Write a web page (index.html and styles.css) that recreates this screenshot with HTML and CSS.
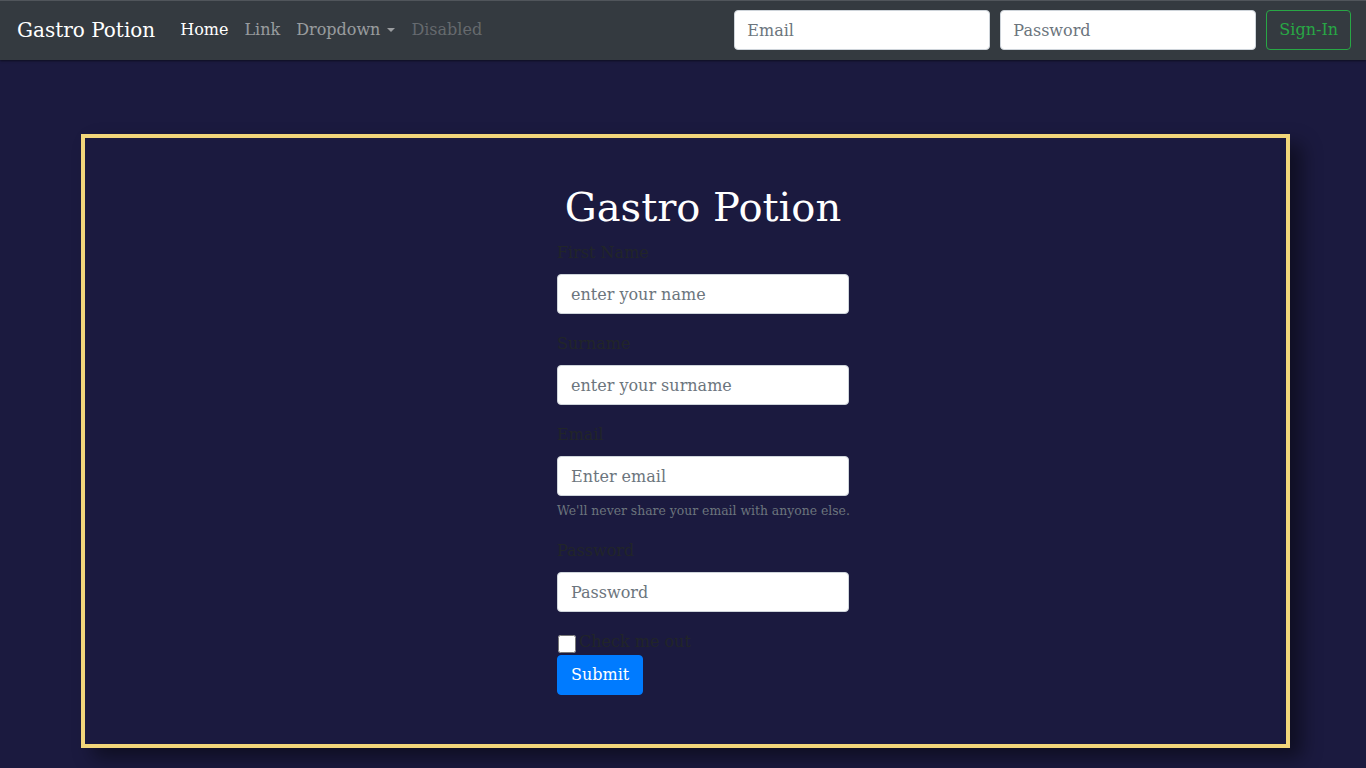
FILE: index.html
```html
<!DOCTYPE html>
<html lang="en">
<head>
<meta charset="utf-8">
<title>Gastro Potion</title>
<link rel="stylesheet" href="styles.css">
</head>
<body>
<nav class="navbar">
  <div class="nav-left">
    <a class="brand" href="#">Gastro Potion</a>
    <ul class="nav-links">
      <li><a class="nav-link active" href="#">Home</a></li>
      <li><a class="nav-link" href="#">Link</a></li>
      <li><a class="nav-link dropdown" href="#">Dropdown<span class="caret"></span></a></li>
      <li><a class="nav-link disabled" href="#">Disabled</a></li>
    </ul>
  </div>
  <form class="nav-form">
    <input class="nav-input" type="email" placeholder="Email">
    <input class="nav-input" type="password" placeholder="Password">
    <button class="btn-signin" type="button">Sign-In</button>
  </form>
</nav>
<main class="page">
  <section class="frame">
    <h1 class="title">Gastro Potion</h1>
    <form class="signup">
      <div class="group">
        <label class="label">First Name</label>
        <input class="field" type="text" placeholder="enter your name">
      </div>
      <div class="group">
        <label class="label">Surname</label>
        <input class="field" type="text" placeholder="enter your surname">
      </div>
      <div class="group">
        <label class="label">Email</label>
        <input class="field" type="email" placeholder="Enter email">
        <small class="help">We'll never share your email with anyone else.</small>
      </div>
      <div class="group">
        <label class="label">Password</label>
        <input class="field" type="password" placeholder="Password">
      </div>
      <div class="check">
        <input class="check-box" type="checkbox">
        <label class="check-label">Check me out</label>
      </div>
      <button class="btn-submit" type="button">Submit</button>
    </form>
  </section>
</main>
</body>
</html>
```

FILE: styles.css
```css
* { box-sizing: border-box; }

body {
  margin: 0;
  background: #1b1a3f;
  font-family: "DejaVu Serif", "Liberation Serif", serif;
  font-size: 16px;
  line-height: 24px;
  color: #212529;
  min-height: 768px;
}

.navbar {
  display: flex;
  align-items: center;
  justify-content: space-between;
  height: 60px;
  padding: 0 15px 1px 17px;
  background: #343a40;
  border-top: 1px solid #50555b;
  box-shadow: 0 1px 2px rgba(0,0,0,.5);
}

.nav-left { display: flex; align-items: center; }

.brand {
  color: #fff;
  text-decoration: none;
  font-size: 20px;
  line-height: 30px;
  margin-right: 17px;
  white-space: nowrap;
}

.nav-links {
  list-style: none;
  display: flex;
  margin: 0;
  padding: 0;
}

.nav-link {
  display: block;
  padding: 8px 8px;
  color: rgba(255,255,255,.5);
  text-decoration: none;
  white-space: nowrap;
}
.nav-link.active { color: #fff; }
.nav-link.disabled { color: rgba(255,255,255,.25); }

.caret {
  display: inline-block;
  margin-left: 7px;
  vertical-align: 3px;
  border-top: 4px solid currentColor;
  border-left: 4px solid transparent;
  border-right: 4px solid transparent;
}

.nav-form { display: flex; align-items: center; gap: 10px; }

.nav-input {
  width: 256px;
  height: 40px;
  padding: 6px 12px;
  font: inherit;
  border: 1px solid #ced4da;
  border-radius: 4px;
  background: #fff;
}
.nav-input::placeholder, .field::placeholder { color: #6c757d; opacity: 1; }

.btn-signin {
  height: 40px;
  padding: 0 12px;
  font: inherit;
  color: #28a745;
  background: transparent;
  border: 1px solid #28a745;
  border-radius: 4px;
}

.page {
  padding: 74px 76px 20px 81px;
}

.frame {
  height: 614px;
  border: 4px solid #f2d67a;
  box-shadow: 12px 10px 18px rgba(0,0,0,.45);
  display: flex;
  flex-direction: column;
  align-items: center;
  padding: 45px 0 0 35px;
}

.title {
  margin: 0 0 8px;
  font-size: 40px;
  font-weight: 400;
  line-height: 48px;
  color: #fff;
}

.signup { width: 292px; }

.group { margin-bottom: 16px; }

.label {
  display: block;
  line-height: 27px;
  margin-bottom: 8px;
  color: #212529;
}

.field {
  display: block;
  width: 100%;
  height: 40px;
  padding: 6px 13px;
  font: inherit;
  border: 1px solid #ced4da;
  border-radius: 4px;
  background: #fff;
  color: #495057;
}

.help {
  display: block;
  margin-top: 5px;
  font-size: 12.4px;
  line-height: 20px;
  color: #6c757d;
  white-space: nowrap;
}

.check {
  display: flex;
  align-items: center;
  height: 27px;
}

.check-box {
  margin: 4px 3px 0 1px;
  width: 18px;
  height: 18px;
}

.check-label { color: #212529; line-height: 27px; }

.btn-submit {
  height: 40px;
  padding: 0 13px;
  font: inherit;
  color: #fff;
  background: #007bff;
  border: 1px solid #007bff;
  border-radius: 4px;
}
```
